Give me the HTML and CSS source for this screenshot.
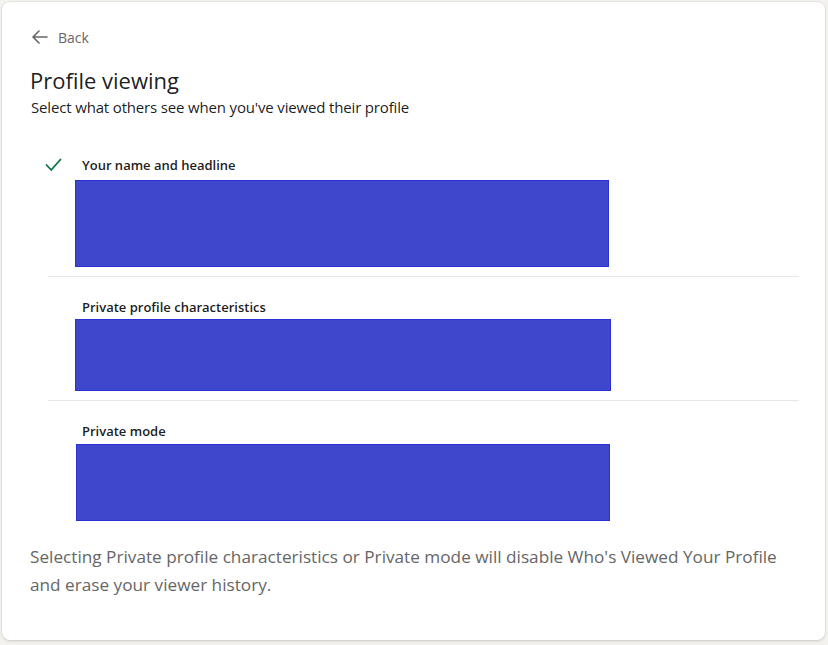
FILE: index.html
```html
<!DOCTYPE html>
<html lang="en">
<head>
<meta charset="utf-8">
<title>Profile viewing</title>
<link rel="stylesheet" href="styles.css">
</head>
<body>
<div class="card">
  <a class="back" href="#">
    <svg class="back-icon" width="17" height="14" viewBox="0 0 17 14" aria-hidden="true">
      <path d="M16 7 H2 M8 1 L2 7 L8 13" fill="none" stroke="#666" stroke-width="1.6" stroke-linecap="round" stroke-linejoin="round"/>
    </svg>
    <span>Back</span>
  </a>
  <h1 class="title">Profile viewing</h1>
  <p class="subtitle">Select what others see when you've viewed their profile</p>

  <ul class="options">
    <li class="option option-1">
      <span class="check">
        <svg width="17" height="14" viewBox="0 0 17 14" aria-hidden="true">
          <path d="M1.5 7 L6.2 12 L15.5 1.5" fill="none" stroke="#057642" stroke-width="1.8" stroke-linecap="round" stroke-linejoin="round"/>
        </svg>
      </span>
      <div class="option-body">
        <div class="option-label">Your name and headline</div>
        <div class="preview preview-1"></div>
      </div>
    </li>
    <li class="option option-2">
      <span class="check"></span>
      <div class="option-body">
        <div class="option-label">Private profile characteristics</div>
        <div class="preview preview-2"></div>
      </div>
    </li>
    <li class="option option-3">
      <span class="check"></span>
      <div class="option-body">
        <div class="option-label">Private mode</div>
        <div class="preview preview-3"></div>
      </div>
    </li>
  </ul>

  <p class="note">Selecting Private profile characteristics or Private mode will disable Who's Viewed Your Profile and erase your viewer history.</p>
</div>
</body>
</html>
```

FILE: styles.css
```css
* { box-sizing: border-box; }

html, body {
  margin: 0;
  padding: 0;
}

body {
  background: #f3f2ef;
  font-family: "Open Sans", "Noto Sans", "Liberation Sans", sans-serif;
  color: #000000e6;
  width: 828px;
  height: 645px;
  overflow: hidden;
}

.card {
  margin: 2px 0 0 2px;
  width: 823px;
  height: 638px;
  background: #ffffff;
  border-radius: 8px;
  box-shadow: 0 0 0 1px rgba(0,0,0,0.06), 0 2px 3px rgba(0,0,0,0.08);
  padding: 25px 0 0 0;
  display: flex;
  flex-direction: column;
}

.back {
  display: flex;
  align-items: center;
  gap: 10px;
  margin-left: 29px;
  height: 20px;
  color: #666666;
  text-decoration: none;
  font-size: 14px;
  font-weight: 400;
  width: max-content;
}

.back-icon { display: block; }

.title {
  margin: 19px 0 0 28px;
  font-size: 22px;
  line-height: 28px;
  font-weight: 400;
  color: #000000e6;
}

.subtitle {
  margin: 2px 0 0 29px;
  font-size: 15px;
  line-height: 22px;
  letter-spacing: -0.16px;
  color: #000000e6;
}

.options {
  list-style: none;
  margin: 16px 0 0 46px;
  padding: 0;
  width: 751px;
}

.option {
  display: flex;
  padding: 22px 0 9px 0;
  border-bottom: 1px solid #e8e8e8;
}

.option-2, .option-3 { padding-top: 21px; }
.option-3 { border-bottom: none; padding-bottom: 0; }

.check {
  width: 29px;
  margin-left: -2px;
  height: 18px;
  display: flex;
  align-items: center;
  flex-shrink: 0;
}

.check svg { display: block; margin-left: -1px; }

.option-body {
  display: flex;
  flex-direction: column;
}

.option-label {
  padding-left: 7px;
  font-size: 13px;
  line-height: 18px;
  font-weight: 600;
  color: #000000e6;
}

.preview {
  background: #3f48cc;
  border: 1px solid #2b31d4;
}

.preview-1 { width: 534px; height: 87px; margin-top: 6px; }
.preview-2 { width: 536px; height: 72px; margin-top: 3px; }
.preview-3 { width: 534px; height: 77px; margin-top: 4px; margin-left: 1px; }

.note {
  margin: 22px 30px 0 28px;
  font-size: 17.2px;
  line-height: 28px;
  color: #666666;
}
```
